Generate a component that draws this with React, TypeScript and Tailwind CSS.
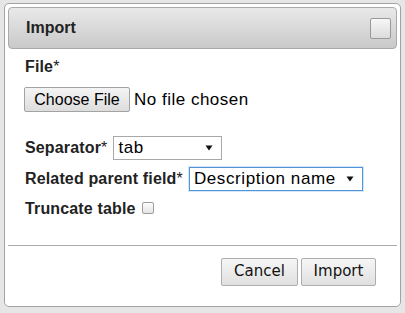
import React from "react"

// small black down-triangle used by the fake selects
function Caret() {
  return (
    <svg width="8" height="6" viewBox="0 0 8 6" className="shrink-0">
      <path d="M0.5 0.5 L7.5 0.5 L4 5.5 Z" fill="#111" />
    </svg>
  )
}

function FakeSelect({ value, width, focused }: { value: string; width: string; focused?: boolean }) {
  return (
    <div
      className={
        "flex h-[24px] items-center justify-between bg-white pl-[4px] pr-[8px] text-[17px] tracking-[0.6px] text-black " +
        width +
        (focused ? " border border-[#4f94d9] shadow-[0_0_0_1px_#d5e7f8]" : " border border-[#a9a9a9]")
      }
    >
      <span className="leading-none">{value}</span>
      <Caret />
    </div>
  )
}

function Label({ text }: { text: string }) {
  return (
    <span className="pl-[1px] text-[16px] leading-[19px] font-bold tracking-[0.15px] text-[#222]">
      {text}
      <span className="font-normal">*</span>
    </span>
  )
}

export default function App() {
  return (
    <div
      className="h-[313px] w-[405px] overflow-hidden bg-[#e6e6e6] pl-[4px] pt-[3px]"
      style={{ fontFamily: '"Liberation Sans", Arial, sans-serif' }}
    >
      <div className="flex h-[304px] w-[397px] flex-col rounded-[5px] border border-[#a3a3a3] bg-white p-[3px]">
        {/* title bar */}
        <div className="flex h-[42px] items-center justify-between rounded-[4px] border border-[#aaaaaa] bg-gradient-to-b from-[#e9e9e9] to-[#c9c9c9] pl-[17px] pr-[5px]">
          <span className="text-[16px] font-bold text-[#222]">Import</span>
          <div className="h-[21px] w-[21px] rounded-[2px] border border-[#9a9a9a] bg-gradient-to-b from-[#f7f7f7] to-[#dcdcdc]" />
        </div>

        {/* form */}
        <div className="flex flex-col pl-[16px]">
          <div className="mt-[6px]">
            <Label text="File" />
          </div>
          <div className="mt-[8px] flex items-center">
            <div className="flex h-[25px] w-[106px] items-center justify-center rounded-[2px] border border-[#a3a3a3] bg-gradient-to-b from-[#f4f4f4] to-[#dddddd] text-[16px] text-black">
              Choose File
            </div>
            <span className="ml-[4px] text-[17px] tracking-[0.5px] text-black">No file chosen</span>
          </div>

          <div className="mt-[23px] flex items-center">
            <Label text="Separator" />
            <div className="ml-[6px]">
              <FakeSelect value="tab" width="w-[109px]" />
            </div>
          </div>

          <div className="mt-[7px] flex items-center">
            <Label text="Related parent field" />
            <div className="ml-[6px]">
              <FakeSelect value="Description name" width="w-[174px]" focused />
            </div>
          </div>

          <div className="mt-[8px] flex items-center">
            <span className="pl-[1px] text-[16px] leading-[19px] font-bold tracking-[0.15px] text-[#222]">Truncate table</span>
            <div className="ml-[6px] h-[12px] w-[12px] rounded-[2px] border border-[#9c9c9c] bg-gradient-to-b from-[#fdfdfd] to-[#e4e4e4]" />
          </div>
        </div>

        <div className="mt-[27px] h-px w-full bg-[#ababab]" />

        {/* buttons */}
        <div
          className="mt-[12px] flex justify-end gap-[3px] pr-[21px]"
          style={{ fontFamily: '"DejaVu Sans", Verdana, sans-serif' }}
        >
          <div className="flex h-[28px] w-[77px] items-center justify-center rounded-[2px] border border-[#adadad] bg-gradient-to-b from-[#f6f6f6] to-[#e0e0e0] text-[15px] text-[#111]">
            Cancel
          </div>
          <div className="flex h-[28px] w-[75px] items-center justify-center rounded-[2px] border border-[#adadad] bg-gradient-to-b from-[#f6f6f6] to-[#e0e0e0] text-[15px] text-[#111]">
            Import
          </div>
        </div>
      </div>
    </div>
  )
}
